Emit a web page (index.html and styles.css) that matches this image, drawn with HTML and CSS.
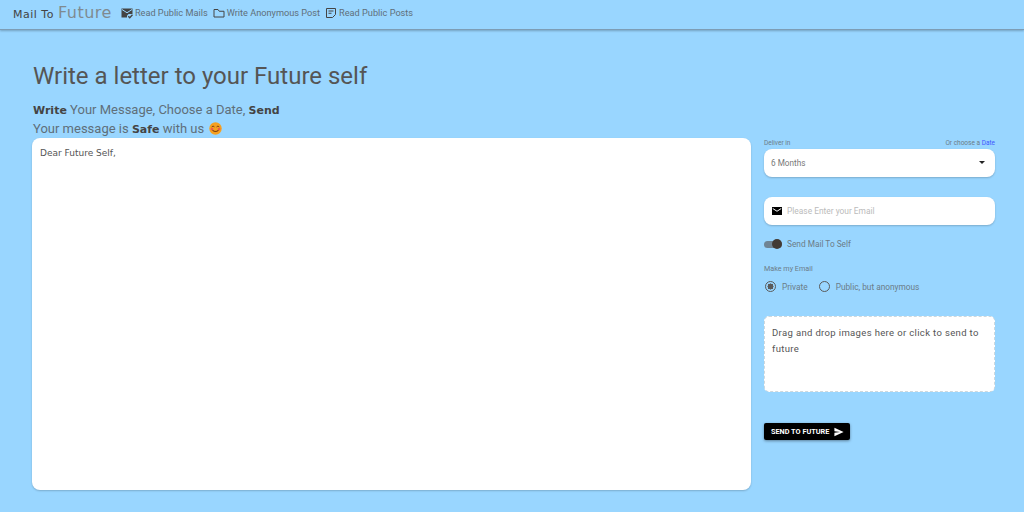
FILE: index.html
```html
<!DOCTYPE html>
<html lang="en">
<head>
    <meta charset="UTF-8">
    <title>Mail To Future</title>
    <link rel="stylesheet" href="styles.css">
</head>
<body>
    <header class="navbar">
        <div class="brand">Mail To <span class="brand-big">Future</span></div>
        <a class="nav-link">
            <svg class="nav-icon" viewBox="0 0 24 24"><path fill="#444" d="M1 3h22v11h-8l-3 3.500V21H1z"/><path fill="none" stroke="#99d6ff" stroke-width="2" d="M2 5l10 6.500L22 5"/><path fill="none" stroke="#444" stroke-width="2.600" d="M14.500 18.500l3 3 5.500-6"/></svg>
            Read Public Mails
        </a>
        <a class="nav-link">
            <svg class="nav-icon" viewBox="0 0 24 24"><path fill="none" stroke="#444" stroke-width="2" d="M2 20V5h8l2.500 3.500H22V20z"/></svg>
            Write Anonymous Post
        </a>
        <a class="nav-link">
            <svg class="nav-icon" viewBox="0 0 24 24"><path fill="none" stroke="#444" stroke-width="2" d="M3 3h18v12l-6 6H3z"/><path fill="none" stroke="#444" stroke-width="2" d="M7 8h10M7 12.500h6"/></svg>
            Read Public Posts
        </a>
    </header>

    <main class="page">
        <h1 class="title">Write a letter to your Future self</h1>
        <p class="tagline"><b class="hand">Write</b> Your Message, Choose a Date, <b class="hand">Send</b></p>
        <p class="tagline">Your message is <b class="hand">Safe</b> with us
            <svg class="emoji" viewBox="0 0 24 24">
                <circle cx="12" cy="12" r="11.500" fill="#f5a020"/>
                <circle cx="5.500" cy="13" r="2.500" fill="#ef5b4c"/>
                <circle cx="18.500" cy="13" r="2.500" fill="#ef5b4c"/>
                <path fill="none" stroke="#7a3f10" stroke-width="1.800" d="M5 9q2.500-3 5 0M14 9q2.500-3 5 0"/>
                <path fill="none" stroke="#7a3f10" stroke-width="2" d="M6.500 15q5.500 5 11 0"/>
            </svg>
        </p>

        <div class="columns">
            <div class="letter">Dear Future Self,</div>

            <form class="side">
                <div class="label-row">
                    <span>Deliver in</span>
                    <span>Or choose a <a class="date-link">Date</a></span>
                </div>
                <div class="field select-field">
                    <span>6 Months</span>
                    <span class="caret"></span>
                </div>

                <div class="field email-field">
                    <svg class="mail-icon" viewBox="0 0 20 16"><path d="M0 0h20v16H0z"/><path fill="none" stroke="#fff" stroke-width="2" d="M1.500 3l8.500 5.500L18.500 3"/></svg>
                    <span class="placeholder">Please Enter your Email</span>
                </div>

                <div class="switch-row">
                    <span class="switch"><span class="switch-thumb"></span></span>
                    <span>Send Mail To Self</span>
                </div>

                <div class="make-label">Make my Email</div>
                <div class="radio-row">
                    <span class="radio radio-on"></span><span class="radio-text">Private</span>
                    <span class="radio"></span><span>Public, but anonymous</span>
                </div>

                <div class="dropzone">Drag and drop images here or click to send to future</div>

                <button class="send-btn" type="button">
                    SEND TO FUTURE
                    <svg class="send-icon" viewBox="0 0 24 24"><path fill="#fff" d="M1 22l22-10L1 2v8l14 2-14 2z"/></svg>
                </button>
            </form>
        </div>
    </main>
</body>
</html>
```

FILE: styles.css
```css
body {
    margin: 0;
    height: 512px;
    overflow: hidden;
    background: #99d6ff;
    font-family: Roboto, Arial, sans-serif;
    color: #5a5a5a;
}

.navbar {
    display: flex;
    align-items: flex-start;
    height: 29px;
    padding-left: 13px;
    border-bottom: 1px solid #7d9db5;
    box-shadow: 0 1px 2px rgba(0, 0, 0, 0.25);
}

.brand {
    font-family: "DejaVu Sans", sans-serif;
    font-size: 11px;
    line-height: 26px;
    letter-spacing: 0.5px;
    color: #444;
    margin-right: 9px;
}

.brand-big {
    font-size: 16px;
    color: #7f8a90;
}

.nav-link {
    display: flex;
    align-items: center;
    gap: 2px;
    height: 25px;
    margin-right: 5px;
    font-size: 9.200px;
    color: #5f6f7a;
}

.nav-icon {
    width: 12px;
    height: 12px;
}

.page {
    padding: 31px 29px 0 32px;
}

.title {
    margin: 0 0 9px 1px;
    font-size: 24px;
    line-height: 30px;
    font-weight: 400;
    color: #555;
}

.tagline {
    height: 19px;
    margin: 0 0 0 1px;
    font-size: 13px;
    line-height: 19px;
    color: #5f6f7a;
}

.hand {
    font-family: "DejaVu Sans", sans-serif;
    font-size: 11px;
    color: #444;
}

.emoji {
    width: 13px;
    height: 13px;
    margin-left: 2px;
    vertical-align: -2px;
}

.columns {
    display: flex;
    gap: 13px;
}

.letter {
    width: 703px;
    height: 334px;
    padding: 9px 8px;
    flex-shrink: 0;
    background: #fff;
    border-radius: 8px;
    box-shadow: 0 1px 2px rgba(0, 0, 0, 0.2);
    font-family: "DejaVu Sans", sans-serif;
    font-size: 9px;
    line-height: 12px;
    color: #555;
}

.side {
    flex: 1;
    font-size: 8.300px;
    color: #6b7c88;
}

.label-row {
    display: flex;
    justify-content: space-between;
    height: 11px;
    font-size: 6.500px;
    line-height: 10px;
}

.date-link {
    color: #3d5afe;
}

.field {
    display: flex;
    align-items: center;
    height: 28px;
    background: #fff;
    border-radius: 8px;
    box-shadow: 0 1px 2px rgba(0, 0, 0, 0.2);
}

.select-field {
    justify-content: space-between;
    padding: 0 10px 1px 7px;
    height: 27px;
    font-size: 8.200px;
    color: #777;
}

.caret {
    border: 3px solid transparent;
    border-top: 3px solid #222;
    border-bottom: 0;
}

.email-field {
    margin-top: 20px;
    padding-left: 8px;
    gap: 5px;
    font-size: 8.400px;
}

.mail-icon {
    width: 10px;
    height: 8px;
}

.placeholder {
    color: #bbb;
}

.switch-row {
    display: flex;
    align-items: center;
    gap: 5px;
    margin-top: 14px;
}

.switch {
    position: relative;
    width: 18px;
    height: 7px;
    border-radius: 4px;
    background: #6f8494;
}

.switch-thumb {
    position: absolute;
    top: -1.500px;
    right: 0;
    width: 10px;
    height: 10px;
    border-radius: 50%;
    background: #423a34;
}

.make-label {
    margin-top: 15px;
    font-size: 7.200px;
    line-height: 10px;
}

.radio-row {
    display: flex;
    align-items: center;
    gap: 6px;
    margin-top: 7px;
    padding-left: 1px;
}

.radio-text {
    margin-right: 5px;
}

.radio {
    width: 9px;
    height: 9px;
    border: 1.200px solid #5a5a5a;
    border-radius: 50%;
}

.radio-on {
    background: radial-gradient(circle, #5a5a5a 45%, transparent 50%);
}

.dropzone {
    height: 57px;
    margin-top: 24px;
    padding: 8px 7px 9px;
    background: #fff;
    border: 1px dashed #cfd8dc;
    border-radius: 5px;
    font-size: 9.500px;
    line-height: 16px;
    letter-spacing: 0.350px;
    color: #555;
}

.send-btn {
    display: flex;
    align-items: center;
    gap: 5px;
    height: 17px;
    margin-top: 31px;
    padding: 0 6px 0 7px;
    border: 0;
    background: #000;
    border-radius: 2px;
    box-shadow: 0 1px 3px rgba(0, 0, 0, 0.4);
    font-family: Roboto, Arial, sans-serif;
    font-size: 7.300px;
    font-weight: 700;
    color: #fff;
}

.send-icon {
    width: 10px;
    height: 10px;
}
```
